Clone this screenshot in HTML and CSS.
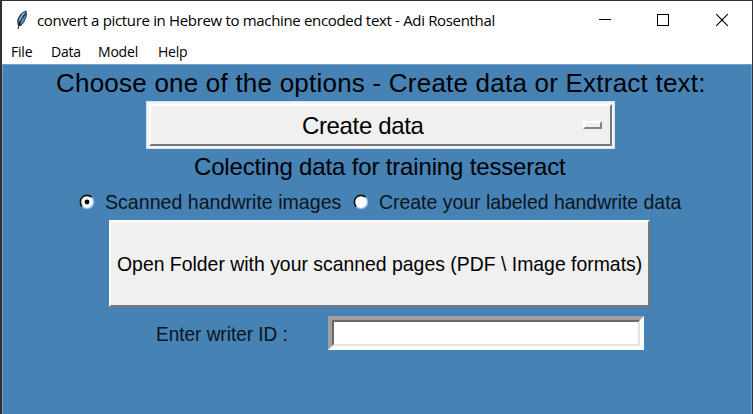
FILE: index.html
```html
<!DOCTYPE html>
<html lang="en">
<head>
<meta charset="utf-8">
<title>convert a picture in Hebrew to machine encoded text - Adi Rosenthal</title>
<link rel="stylesheet" href="styles.css">
</head>
<body>
<div class="window">
  <header class="titlebar">
    <svg class="feather" width="12" height="20" viewBox="0 0 12 20">
      <path d="M10.5 0.5C6 1.5 2 6 1 11L2 16L5 16C8 13 10.3 9 11 5Z" fill="#303b49"/>
      <path d="M9.5 1.5C6 3 3 8 2.3 12.5L6 9Z" fill="#86b6df"/>
      <path d="M10 4L5 11L4.5 15C8 12 9.5 8 10 4Z" fill="#5b92cb"/>
      <path d="M8 5L4 12L2 19" fill="none" stroke="#151b23" stroke-width="1"/>
    </svg>
    <span class="title">convert a picture in Hebrew to machine encoded text - Adi Rosenthal</span>
    <svg class="controls" width="130" height="14" viewBox="0 0 130 14" fill="none" stroke="#000">
      <path d="M0 6.5H12M58.5 1.5H69.5V12.5H58.5Z" shape-rendering="crispEdges"/>
      <path d="M117.2 1.2L128.8 12.8M128.8 1.2L117.2 12.8" stroke-width="1.15"/>
    </svg>
  </header>
  <nav class="menu">
    <span class="m-file">File</span><span class="m-data">Data</span><span class="m-model">Model</span><span class="m-help">Help</span>
  </nav>
  <main class="content">
    <h1 class="heading">Choose one of the options - Create data or Extract text:</h1>
    <div class="option">
      <div class="option-face"><span class="option-text">Create data</span><i class="indicator"></i></div>
    </div>
    <h2 class="subheading">Colecting data for training tesseract</h2>
    <div class="radios">
      <svg class="dot" width="16" height="16" viewBox="0 0 16 16">
        <circle cx="8" cy="8" r="6.6" fill="#fff"/>
        <path d="M3.3 12.7A6.6 6.6 0 0 1 12.7 3.3" fill="none" stroke="#111" stroke-width="1.6"/>
        <path d="M12.7 3.3A6.6 6.6 0 0 1 3.3 12.7" fill="none" stroke="#8fb9f2" stroke-width="1.4"/>
        <circle cx="8" cy="8" r="2.4" fill="#000"/>
      </svg>
      <span class="r-scan">Scanned handwrite images</span>
      <svg class="dot" width="16" height="16" viewBox="0 0 16 16">
        <circle cx="8" cy="8" r="6.6" fill="#fff"/>
        <path d="M3.3 12.7A6.6 6.6 0 0 1 12.7 3.3" fill="none" stroke="#111" stroke-width="1.6"/>
        <path d="M12.7 3.3A6.6 6.6 0 0 1 3.3 12.7" fill="none" stroke="#8fb9f2" stroke-width="1.4"/>
      </svg>
      <span class="r-create">Create your labeled handwrite data</span>
    </div>
    <div class="button"><span class="button-text">Open Folder with your scanned pages (PDF \ Image formats)</span></div>
    <div class="entry-row">
      <div class="entry-cell"><span class="entry-label">Enter writer ID :</span></div>
      <div class="entry"><div class="entry-inner"></div></div>
    </div>
  </main>
</div>
</body>
</html>
```
FILE: styles.css
```css
* { box-sizing: border-box; }
body {
  margin: 0;
  height: 414px;
  padding: 1px 1px 0 2px;
  background: #303134;
  overflow: hidden;
  color: #000;
  font-family: "Liberation Sans", Arial, sans-serif;
}
.window { height: 413px; background: #fff; display: flex; flex-direction: column; }
.titlebar { height: 38px; display: flex; align-items: center; padding-left: 14px; font: 15px "Open Sans", sans-serif; }
.feather { margin-right: 9px; }
.title { white-space: nowrap; letter-spacing: -0.33px; padding-bottom: 1px; }
.controls { margin-left: auto; margin-right: 23px; }
.menu { height: 25px; display: flex; align-items: center; padding: 0 0 1px 9px; font: 14px "Open Sans", sans-serif; letter-spacing: -0.2px; }
.m-file { width: 40px; }
.m-data { width: 47px; }
.m-model { width: 60px; }
.content {
  flex: 1;
  background: #4682b4;
  border: solid #6fa3d2;
  border-width: 1px 1px 0;
  white-space: nowrap;
}
h1, h2 { margin: 0; font-weight: 400; }
.heading { height: 36px; line-height: 36px; padding-left: 53px; font-size: 26px; letter-spacing: 0.22px; }
.option {
  width: 469px;
  height: 48px;
  margin-left: 143px;
  padding: 2px;
  background: #f2f4f7;
  border: 1px solid #d5e3f1;
}
.option-face {
  height: 42px;
  background: #f0f0f0;
  border: 2px solid;
  border-color: #fff #787878 #787878 #fff;
  display: flex;
  align-items: center;
  padding-left: 151px;
}
.option-text { font-size: 24px; letter-spacing: -0.35px; padding-top: 2px; }
.indicator {
  width: 19px;
  height: 8px;
  margin: 0 8px 0 auto;
  background: #f0f0f0;
  border: 2px solid;
  border-color: #fff #858585 #858585 #fff;
}
.subheading { height: 36px; line-height: 36px; padding-left: 191px; font-size: 24px; letter-spacing: -0.16px; }
.radios { height: 35px; display: flex; align-items: center; padding: 0 0 1px 76px; font-size: 21px; color: #0b141c; }
.dot { margin-right: 10px; flex: none; }
.r-scan { width: 248px; transform: scaleX(0.933); transform-origin: left; }
.r-create { transform: scaleX(0.925); transform-origin: left; }
.button {
  width: 541px;
  height: 87px;
  margin-left: 106px;
  display: flex;
  align-items: center;
  padding: 1px 0 0 6px;
  background: #f0f0f0;
  border: 2px solid;
  border-color: #fff #787878 #787878 #fff;
  font-size: 21px;
}
.button-text { transform: scaleX(0.924); transform-origin: left; }
.entry-row { display: flex; align-items: center; margin-top: 9px; padding-left: 153px; font-size: 21px; color: #0b141c; }
.entry-cell { width: 172px; padding-top: 2px; }
.entry-label { display: inline-block; transform: scaleX(0.904); transform-origin: left; }
.entry { width: 316px; height: 34px; border: 4px solid; border-color: #a0a0a0 #fff #fff #a0a0a0; }
.entry-inner { height: 26px; background: #fff; border: 2px solid; border-color: #696969 #e3e3e3 #e3e3e3 #696969; }
```
